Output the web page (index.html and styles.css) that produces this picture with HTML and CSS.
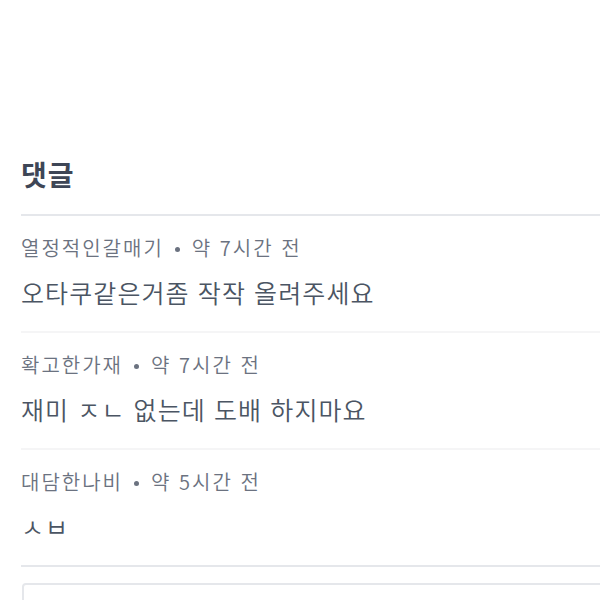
FILE: index.html
```html
<!DOCTYPE html>
<html lang="ko">
<head>
    <meta charset="UTF-8">
    <meta name="viewport" content="width=device-width, initial-scale=1.0">
    <title>댓글</title>
    <link rel="stylesheet" href="styles.css">
</head>
<body>
    <section class="comments">
        <h2 class="comments-title">댓글</h2>
        <ul class="comment-list">
            <li class="comment">
                <div class="comment-meta">열정적인갈매기<span class="dot"></span>약 7시간 전</div>
                <p class="comment-body">오타쿠같은거좀 작작 올려주세요</p>
            </li>
            <li class="comment">
                <div class="comment-meta">확고한가재<span class="dot"></span>약 7시간 전</div>
                <p class="comment-body">재미 ㅈㄴ 없는데 도배 하지마요</p>
            </li>
            <li class="comment">
                <div class="comment-meta">대담한나비<span class="dot"></span>약 5시간 전</div>
                <p class="comment-body">ㅅㅂ</p>
            </li>
        </ul>
        <form class="comment-form">
            <textarea class="comment-input"></textarea>
        </form>
    </section>
</body>
</html>
```

FILE: styles.css
```css
* {
    margin: 0;
    padding: 0;
    box-sizing: border-box;
    font-family: "Noto Sans CJK KR", "Noto Sans", sans-serif;
}

body {
    background: #ffffff;
    overflow: hidden;
}

.comments {
    width: 820px;
    padding: 154px 0 0 21px;
}

.comments-title {
    font-size: 28px;
    line-height: 40px;
    font-weight: 700;
    letter-spacing: 1px;
    color: #3e4656;
    padding-bottom: 20px;
    border-bottom: 2px solid #e5e7eb;
}

.comment-list {
    list-style: none;
    border-bottom: 2px solid #e5e7eb;
}

.comment {
    padding: 17px 0 24px;
    border-bottom: 2px solid #f5f5f6;
}

.comment:last-child {
    border-bottom: none;
}

.comment-meta {
    font-size: 20px;
    line-height: 30px;
    font-weight: 350;
    letter-spacing: 2px;
    color: #6b7280;
}

.comment-meta .dot {
    display: inline-block;
    width: 5px;
    height: 5px;
    border-radius: 50%;
    background: #6b7280;
    vertical-align: middle;
    margin: 0 12px 2px 11px;
}

.comment-body {
    margin-top: 14px;
    font-size: 25px;
    line-height: 30px;
    font-weight: 350;
    letter-spacing: 1.1px;
    color: #4b5563;
}

.comment-form {
    margin-top: 16px;
}

.comment-input {
    display: block;
    width: 100%;
    height: 120px;
    border: 2px solid #e5e7eb;
    border-radius: 4px;
    resize: none;
    margin-left: 1px;
}
```
